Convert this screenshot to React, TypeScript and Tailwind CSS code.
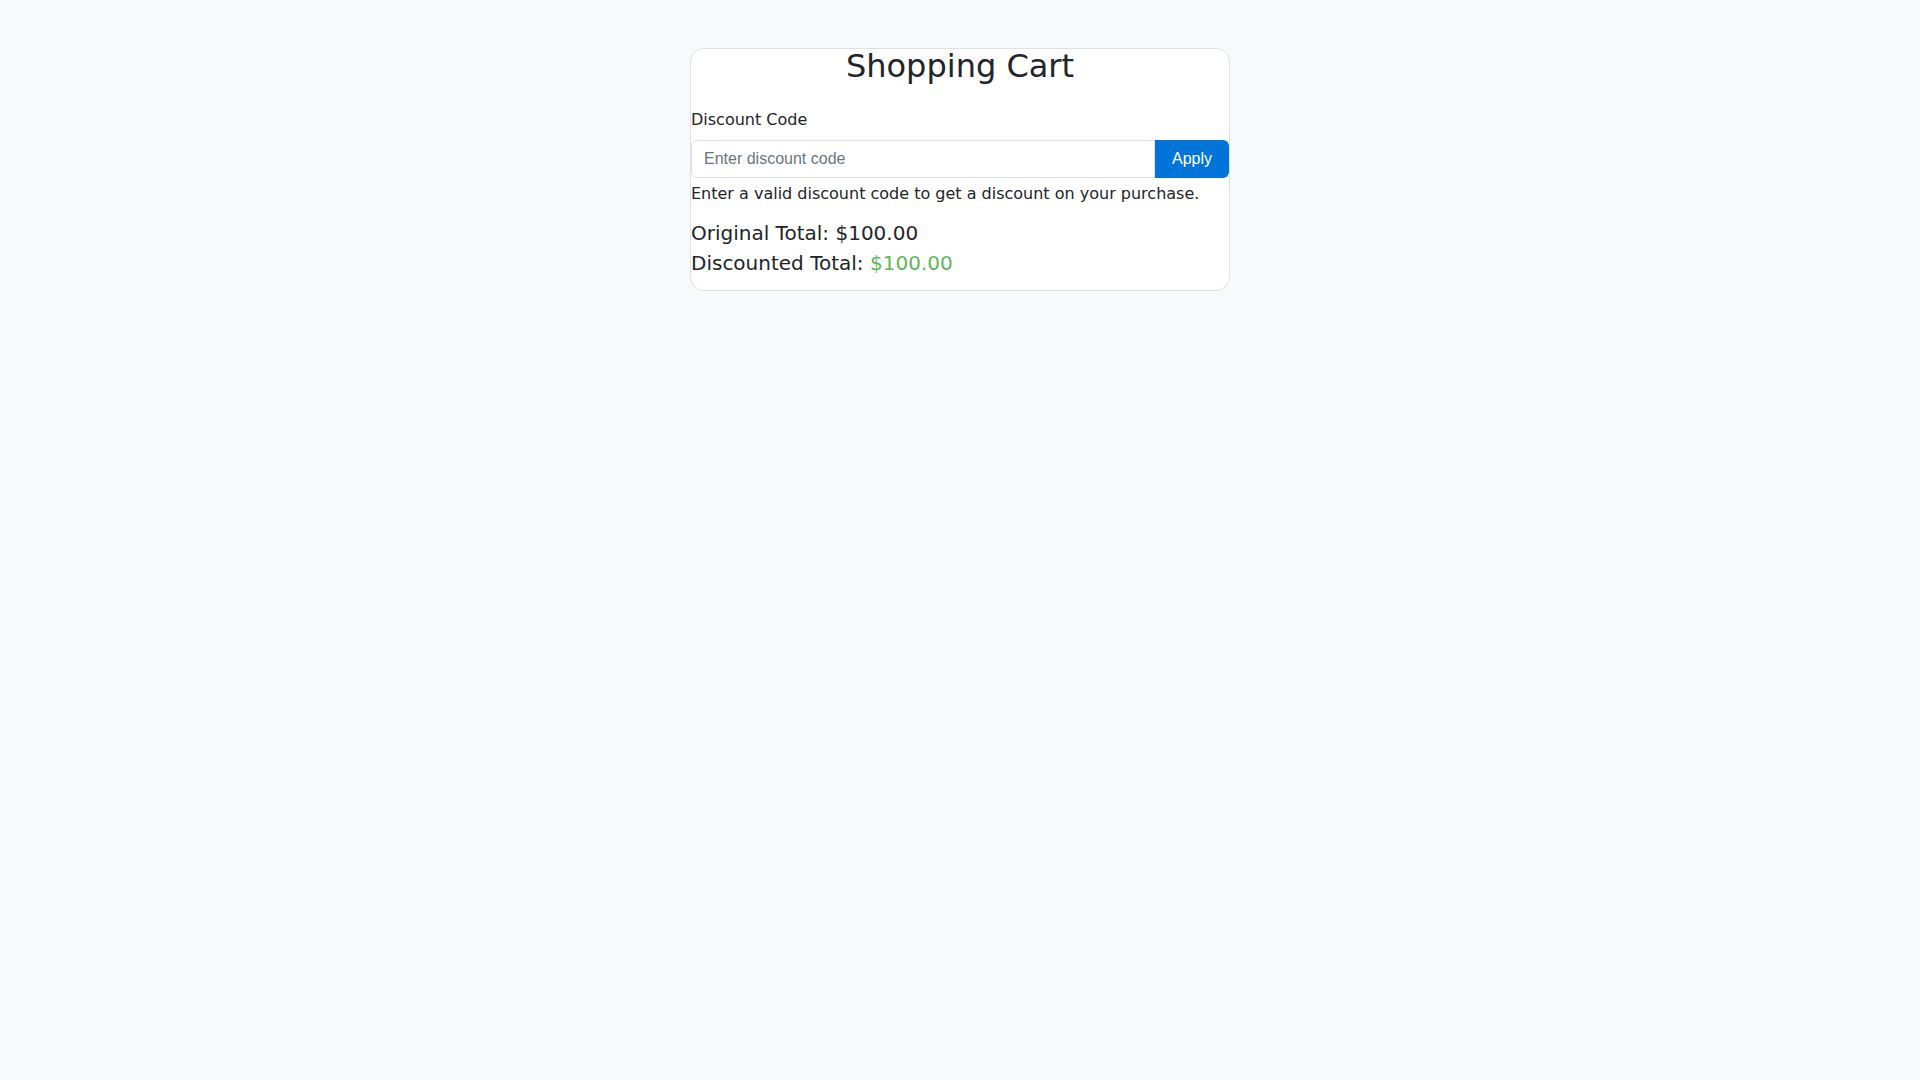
// Shopping cart card with a discount-code field.

import { useState } from 'react'

const ORIGINAL = 100

export default function App() {
  const [code, setCode] = useState('')

  return (
    <div className="min-h-screen bg-[#f8f9fa] pt-12 font-['DejaVu_Sans',sans-serif] text-[#212529]">
      <div className="mx-auto w-[540px] rounded-[14px] border border-[#dee2e6] bg-white pb-[12px]">
        <h1 className="mb-[25px] text-center text-[32px] font-normal leading-[34px]">Shopping Cart</h1>

        <label htmlFor="discount" className="mb-2 block text-base leading-6">
          Discount Code
        </label>
        <div className="flex">
          <input
            id="discount"
            value={code}
            onChange={(e) => setCode(e.target.value)}
            placeholder="Enter discount code"
            className="h-[38px] min-w-0 flex-1 rounded-l-[6px] border border-[#dee2e6] px-3 font-['Liberation_Sans',Arial,sans-serif] text-base text-[#212529] outline-none placeholder:text-[#6c757d]"
          />
          <button className="h-[38px] rounded-r-[6px] bg-[#0074d9] px-[17px] font-['Liberation_Sans',Arial,sans-serif] text-base text-white">
            Apply
          </button>
        </div>
        <p className="mt-[4px] text-base leading-6">
          Enter a valid discount code to get a discount on your purchase.
        </p>

        <div className="mt-[12px] text-xl leading-[30px]">
          <p>Original Total: ${ORIGINAL.toFixed(2)}</p>
          <p>
            Discounted Total: <span className="text-[#5cb85c]">${ORIGINAL.toFixed(2)}</span>
          </p>
        </div>
      </div>
    </div>
  )
}
